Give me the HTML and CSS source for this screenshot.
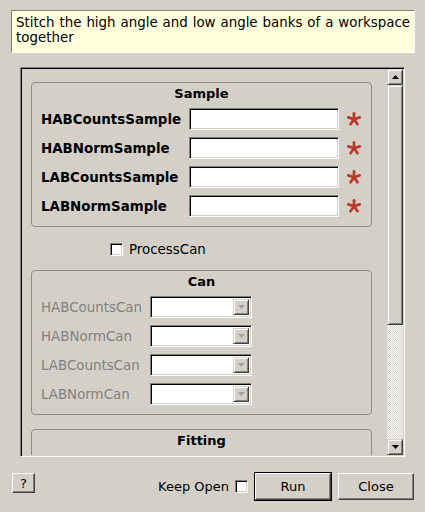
FILE: index.html
```html
<!DOCTYPE html>
<html>
<head>
<meta charset="utf-8">
<link rel="stylesheet" href="styles.css">
</head>
<body>
<div class="dialog">
  <div class="desc">Stitch the high angle and low angle banks of a workspace together</div>

  <div class="scrollarea">
    <div class="viewport">
      <div class="group">
        <div class="group-title">Sample</div>
        <div class="form sample-form">
          <label class="lbl">HABCountsSample</label>
          <div class="input"></div>
          <svg class="req" viewBox="0 0 16 16"><g stroke="#b8382a" stroke-width="2.7" stroke-linecap="round"><line x1="8" y1="8.3" x2="8" y2="2.3"/><line x1="8" y1="8.3" x2="13.7" y2="6.4"/><line x1="8" y1="8.3" x2="11.5" y2="13.2"/><line x1="8" y1="8.3" x2="4.5" y2="13.2"/><line x1="8" y1="8.3" x2="2.3" y2="6.4"/></g></svg>
          <label class="lbl">HABNormSample</label>
          <div class="input"></div>
          <svg class="req" viewBox="0 0 16 16"><g stroke="#b8382a" stroke-width="2.7" stroke-linecap="round"><line x1="8" y1="8.3" x2="8" y2="2.3"/><line x1="8" y1="8.3" x2="13.7" y2="6.4"/><line x1="8" y1="8.3" x2="11.5" y2="13.2"/><line x1="8" y1="8.3" x2="4.5" y2="13.2"/><line x1="8" y1="8.3" x2="2.3" y2="6.4"/></g></svg>
          <label class="lbl">LABCountsSample</label>
          <div class="input"></div>
          <svg class="req" viewBox="0 0 16 16"><g stroke="#b8382a" stroke-width="2.7" stroke-linecap="round"><line x1="8" y1="8.3" x2="8" y2="2.3"/><line x1="8" y1="8.3" x2="13.7" y2="6.4"/><line x1="8" y1="8.3" x2="11.5" y2="13.2"/><line x1="8" y1="8.3" x2="4.5" y2="13.2"/><line x1="8" y1="8.3" x2="2.3" y2="6.4"/></g></svg>
          <label class="lbl">LABNormSample</label>
          <div class="input"></div>
          <svg class="req" viewBox="0 0 16 16"><g stroke="#b8382a" stroke-width="2.7" stroke-linecap="round"><line x1="8" y1="8.3" x2="8" y2="2.3"/><line x1="8" y1="8.3" x2="13.7" y2="6.4"/><line x1="8" y1="8.3" x2="11.5" y2="13.2"/><line x1="8" y1="8.3" x2="4.5" y2="13.2"/><line x1="8" y1="8.3" x2="2.3" y2="6.4"/></g></svg>
        </div>
      </div>

      <div class="check-row">
        <span class="checkbox"></span>
        <span class="check-label">ProcessCan</span>
      </div>

      <div class="group can-group">
        <div class="group-title">Can</div>
        <div class="form can-form">
          <label class="lbl disabled">HABCountsCan</label>
          <div class="combo"><span class="combo-btn"><svg width="7" height="4" viewBox="0 0 7 4"><polygon points="0,0 7,0 3.5,4" fill="#a0a0a0"/></svg></span></div>
          <label class="lbl disabled">HABNormCan</label>
          <div class="combo"><span class="combo-btn"><svg width="7" height="4" viewBox="0 0 7 4"><polygon points="0,0 7,0 3.5,4" fill="#a0a0a0"/></svg></span></div>
          <label class="lbl disabled">LABCountsCan</label>
          <div class="combo"><span class="combo-btn"><svg width="7" height="4" viewBox="0 0 7 4"><polygon points="0,0 7,0 3.5,4" fill="#a0a0a0"/></svg></span></div>
          <label class="lbl disabled">LABNormCan</label>
          <div class="combo"><span class="combo-btn"><svg width="7" height="4" viewBox="0 0 7 4"><polygon points="0,0 7,0 3.5,4" fill="#a0a0a0"/></svg></span></div>
        </div>
      </div>

      <div class="group fit-group">
        <div class="group-title">Fitting</div>
        <div class="form"></div>
      </div>
    </div>

    <div class="vscroll">
      <div class="sb-btn"><svg width="7" height="4" viewBox="0 0 7 4"><polygon points="3.5,0 7,4 0,4" fill="#000"/></svg></div>
      <div class="sb-thumb"></div>
      <div class="sb-trough"></div>
      <div class="sb-btn"><svg width="7" height="4" viewBox="0 0 7 4"><polygon points="0,0 7,0 3.5,4" fill="#000"/></svg></div>
    </div>
  </div>

  <div class="buttons">
    <div class="btn help">?</div>
    <div class="spacer"></div>
    <span class="keep">Keep Open</span>
    <span class="checkbox keep-box"></span>
    <div class="default-frame"><div class="btn run">Run</div></div>
    <div class="btn close">Close</div>
  </div>
</div>
</body>
</html>
```

FILE: styles.css
```css
html, body {
  margin: 0;
  padding: 0;
  background: #d4d0c8;
}

body {
  width: 425px;
  height: 512px;
  overflow: hidden;
  font-family: "DejaVu Sans", sans-serif;
  font-size: 13px;
  color: #000;
}

.dialog {
  display: flex;
  flex-direction: column;
}

.desc {
  box-sizing: border-box;
  margin: 10px 10px 0 11px;
  height: 43px;
  padding: 4px 4px 0 4px;
  background: #ffffdc;
  border: 1px solid;
  border-color: #808080 #ffffff #ffffff #808080;
  font-size: 13.4px;
  line-height: 15px;
  text-align: justify;
}

.scrollarea {
  box-sizing: border-box;
  margin: 14px 0 0 20px;
  width: 385px;
  height: 390px;
  border: 1px solid;
  border-color: #808080 #ffffff #ffffff #808080;
  box-shadow: inset 1px 1px #000000, inset -1px -1px #d4d0c8;
  padding: 1px;
  display: flex;
}

.viewport {
  width: 365px;
  height: 386px;
  overflow: hidden;
  padding: 13px 0 0 9px;
  box-sizing: border-box;
}

.group {
  box-sizing: border-box;
  width: 341px;
  border: 1px solid #8e8c88;
  border-radius: 4px;
  padding: 3px 9px 9px 9px;
}

.group-title {
  font-weight: bold;
  text-align: center;
  height: 16px;
  line-height: 16px;
  margin-bottom: 6px;
}

.form {
  display: grid;
  row-gap: 7px;
  align-items: center;
}

.sample-form {
  grid-template-columns: 148px 150px 23px;
}

.can-form {
  grid-template-columns: 109px 102px;
}

.lbl {
  font-weight: bold;
  font-size: 13.4px;
  white-space: nowrap;
}

.lbl.disabled {
  font-weight: normal;
  color: #808080;
}

.input {
  box-sizing: border-box;
  height: 22px;
  background: #fff;
  border: 1px solid;
  border-color: #808080 #ffffff #ffffff #808080;
  box-shadow: inset 1px 1px #000000, inset -1px -1px #d4d0c8;
}

.req {
  width: 16px;
  height: 16px;
  margin-left: 7px;
}

.check-row {
  display: flex;
  align-items: center;
  height: 20px;
  margin: 12px 0 11px 79px;
}

.checkbox {
  box-sizing: border-box;
  display: inline-block;
  width: 13px;
  height: 13px;
  background: #fff;
  border: 1px solid;
  border-color: #808080 #ffffff #ffffff #808080;
  box-shadow: inset 1px 1px #000000, inset -1px -1px #d4d0c8;
}

.check-label {
  margin-left: 6px;
  font-size: 13.4px;
}

.combo {
  box-sizing: border-box;
  height: 22px;
  background: #fff;
  border: 1px solid;
  border-color: #808080 #ffffff #ffffff #808080;
  box-shadow: inset 1px 1px #000000, inset -1px -1px #d4d0c8;
  padding: 2px;
  display: flex;
  justify-content: flex-end;
}

.combo-btn {
  box-sizing: border-box;
  width: 16px;
  height: 16px;
  background: #d4d0c8;
  border: 1px solid;
  border-color: #d4d0c8 #404040 #404040 #d4d0c8;
  box-shadow: inset 1px 1px #ffffff, inset -1px -1px #808080;
  display: flex;
  align-items: center;
  justify-content: center;
}

.can-group {
  margin-bottom: 14px;
}

.fit-group {
  height: 60px;
}

.vscroll {
  width: 16px;
  height: 386px;
  display: flex;
  flex-direction: column;
}

.sb-btn,
.sb-thumb {
  box-sizing: border-box;
  background: #d4d0c8;
  border: 1px solid;
  border-color: #d4d0c8 #404040 #404040 #d4d0c8;
  box-shadow: inset 1px 1px #ffffff, inset -1px -1px #808080;
}

.sb-btn {
  height: 16px;
  display: flex;
  align-items: center;
  justify-content: center;
}

.sb-btn svg {
  display: block;
}

.sb-thumb {
  height: 240px;
}

.sb-trough {
  flex: 1;
  background-color: #d4d0c8;
  background-image: conic-gradient(#ffffff 0 25%, #d4d0c8 0 50%, #ffffff 0 75%, #d4d0c8 0);
  background-size: 2px 2px;
}

.buttons {
  display: flex;
  align-items: center;
  margin-top: 15px;
  padding: 0 11px 0 12px;
  height: 29px;
}

.spacer {
  flex: 1;
}

.btn {
  box-sizing: border-box;
  display: flex;
  align-items: center;
  justify-content: center;
  background: #d4d0c8;
  border: 1px solid;
  border-color: #ffffff #404040 #404040 #ffffff;
  box-shadow: inset -1px -1px #808080;
}

.help {
  width: 23px;
  height: 20px;
  align-self: flex-start;
  margin-top: 1px;
}

.keep-box {
  margin-left: 6px;
}

.default-frame {
  margin-left: 6px;
  border: 1px solid #000;
  width: 78px;
  height: 29px;
  box-sizing: border-box;
}

.run {
  width: 76px;
  height: 27px;
}

.close {
  margin-left: 6px;
  width: 76px;
  height: 27px;
}
```
